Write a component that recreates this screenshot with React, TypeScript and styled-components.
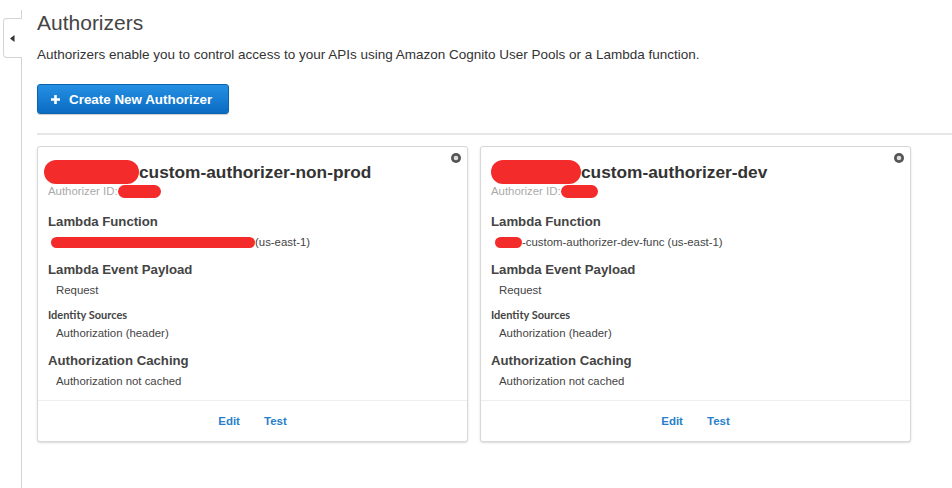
import React from 'react';
import styled, { createGlobalStyle } from 'styled-components';

const GlobalStyle = createGlobalStyle`
  html, body {
    margin: 0;
    padding: 0;
    background: #fff;
  }
  body {
    font-family: "Liberation Sans", Arial, sans-serif;
    color: #333;
  }
`;

const Page = styled.div`
  display: flex;
  min-height: 100vh;
`;

const Sidebar = styled.div`
  display: flex;
  flex-direction: column;
  width: 22px;
  padding-top: 10px;
  flex-shrink: 0;
`;

const SideLine = styled.div<{ $grow?: boolean; $h?: number }>`
  border-right: 1px solid #d4d4d4;
  height: ${(p) => (p.$h ? `${p.$h}px` : 'auto')};
  flex: ${(p) => (p.$grow ? 1 : 'none')};
`;

const SideTab = styled.div`
  margin-left: 3px;
  height: 38px;
  border: 1px solid #d4d4d4;
  border-right: none;
  border-radius: 4px 0 0 4px;
  display: flex;
  align-items: center;
  padding-left: 6px;
`;

const Main = styled.main`
  flex: 1;
  padding: 10px 0 0 15px;
  min-width: 0;
`;

const Title = styled.h1`
  margin: 0;
  font-size: 21px;
  line-height: 25px;
  font-weight: normal;
  color: #444;
`;

const Description = styled.p`
  margin: 11px 0 0;
  font-size: 13.5px;
  line-height: 18px;
  color: #333;
`;

const PrimaryButton = styled.button`
  margin-top: 20px;
  height: 30px;
  width: 192px;
  display: flex;
  align-items: center;
  gap: 8px;
  padding: 0 0 0 12px;
  border: 1px solid #0b62ad;
  border-radius: 3px;
  background: linear-gradient(#2590e3, #0a6cc2);
  color: #fff;
  font-family: "Liberation Sans", Arial, sans-serif;
  font-size: 13.4px;
  font-weight: bold;
  box-shadow: 0 1px 1px rgba(0, 0, 0, 0.2);
  cursor: pointer;
`;

const Divider = styled.hr`
  margin: 19px 0 0;
  border: none;
  height: 2px;
  background: #e6e6e6;
`;

const CardRow = styled.div`
  display: flex;
  gap: 12px;
  margin-top: 11px;
`;

const Card = styled.section`
  position: relative;
  width: 431px;
  box-sizing: border-box;
  border: 1px solid #d8d8d8;
  border-radius: 3px;
  box-shadow: 0 1px 2px rgba(0, 0, 0, 0.15);
  background: #fff;
`;

const CardBody = styled.div`
  padding: 13px 10px 12px;
`;

const CloseButton = styled.span`
  position: absolute;
  top: 6px;
  right: 6px;
  width: 10px;
  height: 10px;
  display: flex;
`;

const CardTitle = styled.h2`
  margin: 0;
  font-size: 17.3px;
  line-height: 22px;
  font-weight: bold;
  color: #333;
  display: flex;
  align-items: center;
`;

const Redaction = styled.span<{ $w: number; $h: number; $ml?: number }>`
  display: inline-block;
  flex-shrink: 0;
  width: ${(p) => p.$w}px;
  height: ${(p) => p.$h}px;
  margin-left: ${(p) => p.$ml ?? 0}px;
  border-radius: ${(p) => p.$h / 2}px;
  background: #f42b2b;
`;

const AuthorizerId = styled.div`
  font-size: 11.4px;
  line-height: 14px;
  color: #aaa;
  display: flex;
  align-items: center;
  padding-bottom: 3px;
`;

const Label = styled.h3<{ $small?: boolean }>`
  margin: ${(p) => (p.$small ? '11px' : '13px')} 0 0;
  font-family: ${(p) => (p.$small ? 'Lato, "Liberation Sans", sans-serif' : '"Liberation Sans", Arial, sans-serif')};
  font-size: ${(p) => (p.$small ? '11px' : '13.2px')};
  line-height: ${(p) => (p.$small ? '14px' : '16px')};
  font-weight: bold;
  color: #444;
`;

const Value = styled.div<{ $mt: number; $indent?: boolean }>`
  margin-top: ${(p) => p.$mt}px;
  padding-left: ${(p) => (p.$indent ? '8px' : '0')};
  font-size: 11.4px;
  line-height: 14px;
  color: #444;
  display: flex;
  align-items: center;
`;

const CardFooter = styled.div`
  border-top: 1px solid #eee;
  height: 40px;
  display: flex;
  align-items: center;
  justify-content: center;
  gap: 24px;
`;

const FooterLink = styled.a`
  font-size: 11.5px;
  font-weight: bold;
  color: #2a7fcb;
  text-decoration: none;
  cursor: pointer;
`;

const Plus = () => (
  <svg width="11" height="11" viewBox="0 0 11 11">
    <path d="M5.5 1v9M1 5.5h9" stroke="#fff" strokeWidth="2.6" />
  </svg>
);

const CloseIcon = () => (
  <svg width="10" height="10" viewBox="0 0 10 10">
    <circle cx="5" cy="5" r="5" fill="#555" />
    <circle cx="5" cy="5" r="2.3" fill="#ddd" />
  </svg>
);

interface AuthorizerProps {
  name: string;
  titleMask: { w: number; ml: number };
  idMask: { w: number; ml: number };
  fnMask: { w: number; ml: number };
  fnText: string;
}

const AuthorizerCard = ({ name, titleMask, idMask, fnMask, fnText }: AuthorizerProps) => (
  <Card>
    <CloseButton>
      <CloseIcon />
    </CloseButton>
    <CardBody>
      <CardTitle>
        <Redaction $w={titleMask.w} $h={24} $ml={titleMask.ml} />
        {name}
      </CardTitle>
      <AuthorizerId>
        Authorizer ID:
        <Redaction $w={idMask.w} $h={13} $ml={idMask.ml} />
      </AuthorizerId>
      <Label>Lambda Function</Label>
      <Value $mt={5}>
        <Redaction $w={fnMask.w} $h={11} $ml={fnMask.ml} />
        {fnText}
      </Value>
      <Label>Lambda Event Payload</Label>
      <Value $mt={5} $indent>Request</Value>
      <Label $small>Identity Sources</Label>
      <Value $mt={4} $indent>Authorization (header)</Value>
      <Label>Authorization Caching</Label>
      <Value $mt={5} $indent>Authorization not cached</Value>
    </CardBody>
    <CardFooter>
      <FooterLink>Edit</FooterLink>
      <FooterLink>Test</FooterLink>
    </CardFooter>
  </Card>
);

const TabArrow = () => (
  <svg width="5" height="7" viewBox="0 0 5 7">
    <path d="M4.5 0v7L0 3.5z" fill="#333" />
  </svg>
);

export default function App() {
  return (
    <>
      <GlobalStyle />
      <Page>
        <Sidebar>
          <SideLine $h={8} />
          <SideTab>
            <TabArrow />
          </SideTab>
          <SideLine $grow />
        </Sidebar>
        <Main>
          <Title>Authorizers</Title>
          <Description>
            Authorizers enable you to control access to your APIs using Amazon Cognito User Pools or a Lambda function.
          </Description>
          <PrimaryButton>
            <Plus />
            Create New Authorizer
          </PrimaryButton>
          <Divider />
          <CardRow>
            <AuthorizerCard
              name="custom-authorizer-non-prod"
              titleMask={{ w: 95, ml: -4 }}
              idMask={{ w: 43, ml: 0 }}
              fnMask={{ w: 204, ml: 3 }}
              fnText="(us-east-1)"
            />
            <AuthorizerCard
              name="custom-authorizer-dev"
              titleMask={{ w: 90, ml: 0 }}
              idMask={{ w: 37, ml: 0 }}
              fnMask={{ w: 27, ml: 4 }}
              fnText="-custom-authorizer-dev-func (us-east-1)"
            />
          </CardRow>
        </Main>
      </Page>
    </>
  );
}
